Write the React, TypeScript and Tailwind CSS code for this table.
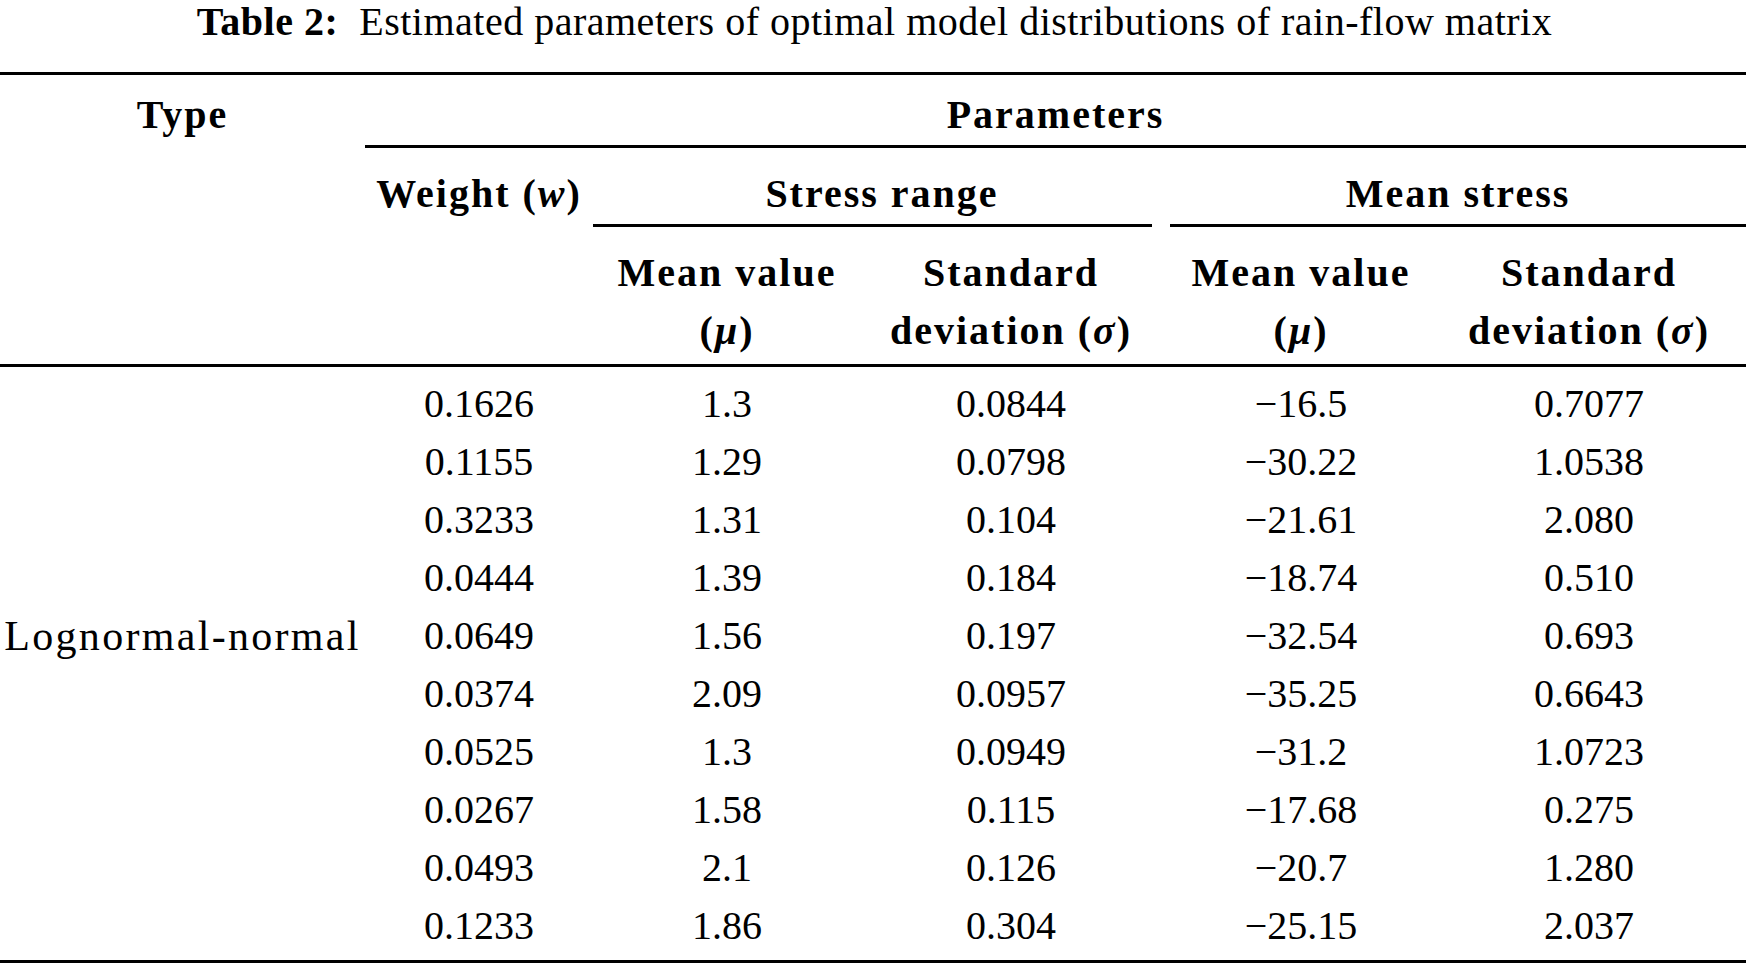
const rows = [
  ['0.1626', '1.3', '0.0844', '−16.5', '0.7077'],
  ['0.1155', '1.29', '0.0798', '−30.22', '1.0538'],
  ['0.3233', '1.31', '0.104', '−21.61', '2.080'],
  ['0.0444', '1.39', '0.184', '−18.74', '0.510'],
  ['0.0649', '1.56', '0.197', '−32.54', '0.693'],
  ['0.0374', '2.09', '0.0957', '−35.25', '0.6643'],
  ['0.0525', '1.3', '0.0949', '−31.2', '1.0723'],
  ['0.0267', '1.58', '0.115', '−17.68', '0.275'],
  ['0.0493', '2.1', '0.126', '−20.7', '1.280'],
  ['0.1233', '1.86', '0.304', '−25.15', '2.037'],
];

const cols = 'grid grid-cols-[365px_228px_268px_300px_280px_296px]';

export default function App() {
  return (
    <div className="w-[1749px] h-[965px] bg-white text-black font-['Liberation_Serif',serif] overflow-hidden">
      <div className="h-[72px] flex justify-center">
        <p className="text-[40px] leading-[44px] tracking-[0.5px] whitespace-nowrap">
          <span className="font-bold">Table 2:</span>
          <span>&nbsp; Estimated parameters of optimal model distributions of rain-flow matrix</span>
        </p>
      </div>
      <div className="w-[1746px] h-[3px] bg-black" />

      <div className={`${cols} grid-rows-[73px_79px_137px] font-bold text-[40px] tracking-[2px]`}>
        <div className="row-span-3 text-center pt-[20px] leading-[40px]">Type</div>
        <div className="col-span-5 text-center pt-[20px] leading-[40px] border-b-[3px] border-black w-[1381px]">
          Parameters
        </div>

        <div className="row-span-2 text-center pt-[26px] leading-[40px] whitespace-nowrap">
          Weight (<i className="font-bold">w</i>)
        </div>
        <div className="col-span-2 flex flex-col">
          <div className="flex-1 text-center pt-[26px] pl-[10px] leading-[40px]">Stress range</div>
          <div className="h-[3px] bg-black mr-[9px]" />
        </div>
        <div className="col-span-2 flex flex-col w-[585px]">
          <div className="flex-1 text-center pt-[26px] pl-[9px] leading-[40px]">Mean stress</div>
          <div className="h-[3px] bg-black ml-[9px]" />
        </div>

        <div className="text-center pt-[17px] leading-[58px]">
          Mean value
          <br />(<i>μ</i>)
        </div>
        <div className="text-center pt-[17px] leading-[58px]">
          Standard
          <br />
          deviation (<i>σ</i>)
        </div>
        <div className="text-center pt-[17px] leading-[58px]">
          Mean value
          <br />(<i>μ</i>)
        </div>
        <div className="text-center pt-[17px] leading-[58px]">
          Standard
          <br />
          deviation (<i>σ</i>)
        </div>
      </div>
      <div className="w-[1746px] h-[3px] bg-black" />

      <div className="pt-[8px] pb-[5px] text-[40px]">
        {rows.map((r, i) => (
          <div key={i} className={`${cols} h-[58px] leading-[58px] text-center`}>
            <div className="text-[42px] tracking-[2.3px] whitespace-nowrap">{i === 4 ? 'Lognormal-normal' : ''}</div>
            {r.map((v, j) => (
              <div key={j}>{v}</div>
            ))}
          </div>
        ))}
      </div>
      <div className="w-[1746px] h-[3px] bg-black" />
    </div>
  );
}
